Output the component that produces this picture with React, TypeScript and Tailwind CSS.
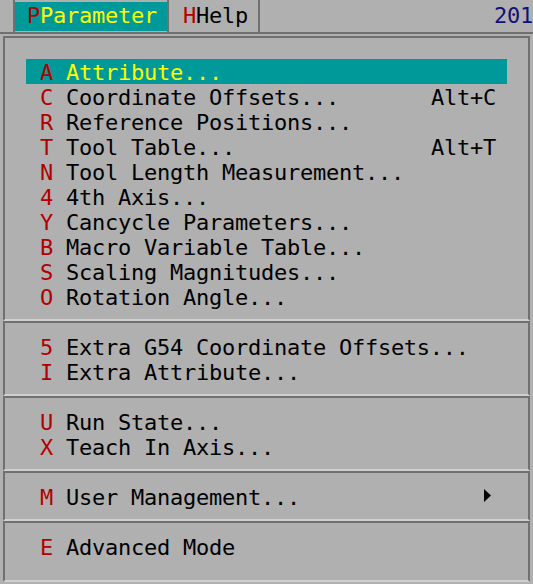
import React from "react";

type Item = { key: string; label: string; shortcut?: string; active?: boolean; sub?: boolean };

const groups: Item[][] = [
  [
    { key: "A", label: "Attribute...", active: true },
    { key: "C", label: "Coordinate Offsets...", shortcut: "Alt+C" },
    { key: "R", label: "Reference Positions..." },
    { key: "T", label: "Tool Table...", shortcut: "Alt+T" },
    { key: "N", label: "Tool Length Measurement..." },
    { key: "4", label: "4th Axis..." },
    { key: "Y", label: "Cancycle Parameters..." },
    { key: "B", label: "Macro Variable Table..." },
    { key: "S", label: "Scaling Magnitudes..." },
    { key: "O", label: "Rotation Angle..." },
  ],
  [
    { key: "5", label: "Extra G54 Coordinate Offsets..." },
    { key: "I", label: "Extra Attribute..." },
  ],
  [
    { key: "U", label: "Run State..." },
    { key: "X", label: "Teach In Axis..." },
  ],
  [{ key: "M", label: "User Management...", sub: true }],
  [{ key: "E", label: "Advanced Mode" }],
];

const font = {
  fontFamily: '"DejaVu Sans Mono", monospace',
  fontSize: "22px",
  letterSpacing: "-0.25px",
};

function Row({ it }: { it: Item }) {
  return (
    <div
      className={`mx-[21px] h-[25px] leading-[28px] pl-[14px] pr-[12px] flex items-start whitespace-pre ${
        it.active ? "bg-[#009999]" : ""
      }`}
    >
      <span className="w-[26px] shrink-0 text-[#b00000]">{it.key}</span>
      <span className={`w-[365px] shrink-0 ${it.active ? "text-[#ffff00]" : "text-black"}`}>{it.label}</span>
      <span className="flex-1 text-black relative">
        {it.shortcut}
        {it.sub && (
          <svg
            className="absolute left-[53px] top-[5px]"
            width="8"
            height="13"
            viewBox="0 0 8 13"
          >
            <polygon points="0,0 7,6.5 0,13" fill="#000" />
          </svg>
        )}
      </span>
    </div>
  );
}

export default function App() {
  return (
    <div className="w-[533px] h-[584px] bg-[#b0b0b0] overflow-hidden" style={font}>
      {/* menubar */}
      <div className="h-[34px] border-b-2 border-[#707070] flex items-stretch">
        <div className="w-[15px] shrink-0 border-r-2 border-[#707070]" />
        <div className="w-[152px] shrink-0 mt-[2px] mb-[1px] bg-[#009999] pl-[12px] leading-[28px] whitespace-pre">
          <span className="text-[#b00000]">P</span>
          <span className="text-[#ffff00]">Parameter</span>
        </div>
        <div className="w-[93px] shrink-0 border-l-2 border-r-2 border-[#707070] pl-[14px] leading-[32px] whitespace-pre">
          <span className="text-[#b00000]">H</span>
          <span className="text-black">Help</span>
        </div>
        <div className="flex-1 flex justify-end leading-[32px] overflow-hidden">
          <span className="text-[#101078] whitespace-pre">201</span>
        </div>
      </div>
      {/* dropdown */}
      <div className="h-[550px] pt-[2px] pl-[3px] pr-[3px]">
        {groups.map((g, gi) => (
          <div
            key={gi}
            className={`border-t-2 border-l-2 border-r-2 border-t-[#707070] border-l-[#707070] border-r-[#707070] border-b-2 border-b-[#cfcfcf] ${
              gi === 0 ? "pt-[21px]" : "pt-[11px]"
            } ${gi === groups.length - 1 ? "pb-[21px]" : "pb-[10px]"}`}
          >
            {g.map((it) => (
              <Row key={it.key} it={it} />
            ))}
          </div>
        ))}
      </div>
    </div>
  );
}
